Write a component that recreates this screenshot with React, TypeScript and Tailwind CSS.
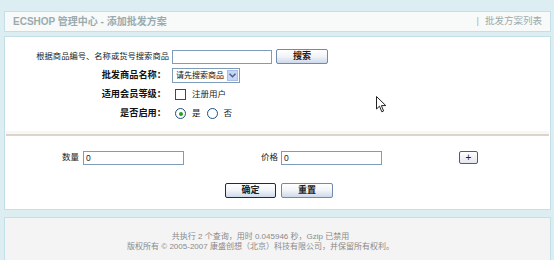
import React from "react";

const font = { fontFamily: '"Liberation Sans", "Noto Sans CJK SC", sans-serif' };

function XPButton({ label, w, strong }: { label: string; w: string; strong?: boolean }) {
  return (
    <div
      className={`${w} h-[15px] flex items-center justify-center whitespace-nowrap text-[9px] font-bold text-[#222] rounded-[2px] border ${
        strong ? "border-[#1a2a55]" : "border-[#6f89b0]"
      } bg-gradient-to-b from-[#ffffff] via-[#f1f4f8] to-[#cdd9ea]`}
    >
      {label}
    </div>
  );
}

export default function App() {
  return (
    <div
      style={font}
      className="relative w-[554px] h-[260px] overflow-hidden bg-[#ddeef3] pl-[4px] pr-[3px] pt-[11px] text-[8.5px] text-[#222] whitespace-nowrap"
    >
      {/* header */}
      <div className="h-[21px] border border-[#c3dfe8] bg-[#f8f9f9] flex items-center justify-between pl-[8px] pr-[8px]">
        <span className="text-[10px] font-bold text-[#9aabae]">ECSHOP 管理中心 - 添加批发方案</span>
        <span className="text-[9.5px] text-[#9aabae]">
          <span className="mr-[6px] text-[#a8b4b6]">|</span>批发方案列表
        </span>
      </div>

      {/* main */}
      <div className="mt-[4px] h-[174px] border border-[#c3dfe8] bg-white pt-[10px]">
        <div className="grid grid-cols-[164px_1fr] gap-x-[3px]">
          <div className="h-[19px] flex items-center justify-end text-[8.3px] text-[#222]">根据商品编号、名称或货号搜索商品</div>
          <div className="h-[19px] flex items-center gap-[4px]">
            <div className="w-[100px] h-[14px] border border-[#7f9db9] bg-white" />
            <XPButton label="搜索" w="w-[52px]" />
          </div>

          <div className="h-[19px] flex items-center justify-end pr-[3px] font-bold text-[9.2px] text-[#111]">批发商品名称：</div>
          <div className="h-[19px] flex items-center">
            <div className="w-[68px] h-[15px] border border-[#7f9db9] bg-white flex items-center justify-between pl-[3px] pr-[1px] text-[8px] text-[#111]">
              <span>请先搜索商品</span>
              <span className="w-[11px] h-[11px] bg-[#c6d6f8] border border-[#a9bde8] flex items-center justify-center">
                <svg width="7" height="5" viewBox="0 0 7 5">
                  <path d="M0.5 0.8 L3.5 3.8 L6.5 0.8" fill="none" stroke="#4d6185" strokeWidth="1.5" />
                </svg>
              </span>
            </div>
          </div>

          <div className="h-[19px] flex items-center justify-end pr-[3px] font-bold text-[9.2px] text-[#111]">适用会员等级：</div>
          <div className="h-[19px] flex items-center pl-[3px] gap-[6px]">
            <div className="w-[11px] h-[11px] border border-[#1c5180] bg-white" />
            <span className="text-[8.5px]">注册用户</span>
          </div>

          <div className="h-[19px] flex items-center justify-end pr-[3px] font-bold text-[9.2px] text-[#111]">是否启用：</div>
          <div className="h-[19px] flex items-center pl-[3px] text-[8.5px]">
            <div className="w-[11px] h-[11px] rounded-full border border-[#1c5180] bg-white flex items-center justify-center">
              <div className="w-[4px] h-[4px] rounded-full bg-[#21a121]" />
            </div>
            <span className="ml-[6px]">是</span>
            <div className="ml-[6px] w-[11px] h-[11px] rounded-full border border-[#1c5180] bg-white" />
            <span className="ml-[6px]">否</span>
          </div>
        </div>

        {/* separator */}
        <div className="mt-[8px] mx-[1px] h-[5px] bg-[#f7f7f7] border-b-2 border-[#ddd3c8]" />

        {/* quantity/price row */}
        <div className="mt-[12px] h-[19px] flex items-center">
          <span className="ml-[57px] w-[21px]">数量</span>
          <div className="w-[101px] h-[14px] border border-[#7f9db9] bg-white text-[8.5px] leading-[12px] pl-[2px]">0</div>
          <span className="ml-[77px] w-[20px]">价格</span>
          <div className="w-[101px] h-[14px] border border-[#7f9db9] bg-white text-[8.5px] leading-[12px] pl-[2px]">0</div>
          <div className="ml-[77px] w-[19px] h-[13px] rounded-[2px] border border-[#3d5f99] bg-gradient-to-b from-white to-[#e4e7ee] flex items-center justify-center text-[10px] leading-none">
            +
          </div>
        </div>

        {/* buttons */}
        <div className="mt-[16px] flex justify-center gap-[5px] pl-[3px]">
          <XPButton label="确定" w="w-[51px]" strong />
          <XPButton label="重置" w="w-[52px]" />
        </div>
      </div>

      {/* footer */}
      <div className="mt-[7px] h-[50px] border border-[#c3dfe8] bg-[#f4f4f4] pt-[14px] pr-[34px] text-center text-[8px] leading-[10px] text-[#8a8a8a]">
        <div>共执行 2 个查询，用时 0.045946 秒，Gzip 已禁用</div>
        <div>版权所有 © 2005-2007 康盛创想（北京）科技有限公司，并保留所有权利。</div>
      </div>

      {/* mouse cursor */}
      <svg className="absolute left-[376px] top-[96px]" width="11" height="17" viewBox="0 0 11 17">
        <path d="M0.5 0.5 L0.5 13 L3.5 10.2 L5.8 15.8 L7.6 15 L5.4 9.6 L9.8 9.6 Z" fill="white" stroke="#222" strokeWidth="1" />
      </svg>
    </div>
  );
}
